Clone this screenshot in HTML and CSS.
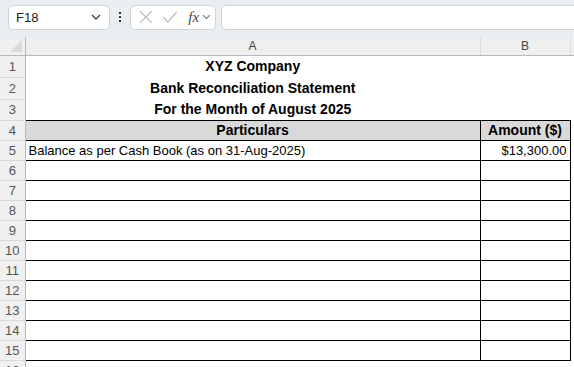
FILE: index.html
```html
<!DOCTYPE html>
<html lang="en">
<head>
  <meta charset="UTF-8" />
  <title>Bank Reconciliation Statement</title>
  <link rel="stylesheet" href="styles.css">
</head>
<body>
  <div class="toolbar">
    <div class="namebox">
      <span>F18</span>
      <svg class="chev" width="10" height="6" viewBox="0 0 10 6"><path d="M1 1l4 4 4-4" fill="none" stroke="#444" stroke-width="1.3"/></svg>
    </div>
    <div class="dots"><span></span><span></span><span></span></div>
    <div class="fx-group">
      <svg width="14" height="14" viewBox="0 0 14 14"><path d="M1 1l12 12M13 1L1 13" stroke="#b5b5b5" stroke-width="1.2"/></svg>
      <svg width="16" height="14" viewBox="0 0 16 14"><path d="M1 7l5 5 9-10" fill="none" stroke="#b5b5b5" stroke-width="1.2"/></svg>
      <span class="fx">fx</span>
      <svg class="chev-sm" width="9" height="6" viewBox="0 0 9 6"><path d="M1 1l3.5 3.5L8 1" fill="none" stroke="#777" stroke-width="1.1"/></svg>
    </div>
    <div class="formula"></div>
  </div>

  <table class="sheet">
    <colgroup>
      <col class="c-num">
      <col class="c-a">
      <col class="c-b">
      <col class="c-rest">
    </colgroup>
    <thead>
      <tr>
        <th class="corner"><span class="tri"></span></th>
        <th>A</th>
        <th>B</th>
        <th class="rest"></th>
      </tr>
    </thead>
    <tbody>
      <tr class="tall"><td class="num">1</td><td class="title">XYZ Company</td><td></td><td></td></tr>
      <tr class="tall"><td class="num">2</td><td class="title">Bank Reconciliation Statement</td><td></td><td></td></tr>
      <tr class="mid"><td class="num">3</td><td class="title">For the Month of August 2025</td><td></td><td></td></tr>
      <tr class="head"><td class="num">4</td><td class="box">Particulars</td><td class="box">Amount ($)</td><td></td></tr>
      <tr><td class="num">5</td><td class="box">Balance as per Cash Book (as on 31-Aug-2025)</td><td class="box amt">$13,300.00</td><td></td></tr>
      <tr><td class="num">6</td><td class="box"></td><td class="box"></td><td></td></tr>
      <tr><td class="num">7</td><td class="box"></td><td class="box"></td><td></td></tr>
      <tr><td class="num">8</td><td class="box"></td><td class="box"></td><td></td></tr>
      <tr><td class="num">9</td><td class="box"></td><td class="box"></td><td></td></tr>
      <tr><td class="num">10</td><td class="box"></td><td class="box"></td><td></td></tr>
      <tr><td class="num">11</td><td class="box"></td><td class="box"></td><td></td></tr>
      <tr><td class="num">12</td><td class="box"></td><td class="box"></td><td></td></tr>
      <tr><td class="num">13</td><td class="box"></td><td class="box"></td><td></td></tr>
      <tr><td class="num">14</td><td class="box"></td><td class="box"></td><td></td></tr>
      <tr><td class="num">15</td><td class="box"></td><td class="box"></td><td></td></tr>
      <tr><td class="num">16</td><td></td><td></td><td></td></tr>
    </tbody>
  </table>
</body>
</html>
```

FILE: styles.css
```css
* { box-sizing: border-box; }
body {
  margin: 0;
  font-family: "Liberation Sans", Arial, sans-serif;
  background: #fff;
  color: #000;
  overflow: hidden;
}
.toolbar {
  display: flex;
  align-items: center;
  height: 37px;
  padding: 0 0 3px 8px;
  background: #e8eef1;
}
.namebox {
  display: flex;
  align-items: center;
  justify-content: space-between;
  width: 102px;
  height: 25px;
  padding: 0 8px 0 7px;
  background: #fff;
  border: 1px solid #d0d4d7;
  border-radius: 5px;
  font-size: 13px;
  color: #222;
}
.dots {
  display: flex;
  flex-direction: column;
  align-items: center;
  gap: 2px;
  width: 20px;
}
.dots span {
  width: 2px;
  height: 2px;
  background: #333;
}
.fx-group {
  display: flex;
  align-items: center;
  gap: 9px;
  width: 86px;
  height: 25px;
  padding: 0 4px 0 8px;
  background: #fff;
  border: 1px solid #d0d4d7;
  border-radius: 5px;
}
.fx {
  font-family: "Liberation Serif", "Times New Roman", serif;
  font-style: italic;
  font-size: 15px;
  color: #444;
  margin-left: 2px;
  margin-right: -6px;
}
.formula {
  flex: 1;
  height: 25px;
  margin-left: 5px;
  background: #fff;
  border: 1px solid #d0d4d7;
  border-right: none;
  border-radius: 5px 0 0 5px;
}
.sheet {
  border-collapse: collapse;
  table-layout: fixed;
  width: 574px;
  font-size: 13px;
}
.c-num { width: 25px; }
.c-a { width: 455px; }
.c-b { width: 90px; }
.c-rest { width: 4px; }
th {
  height: 18px;
  padding: 0;
  background: #efefef;
  border-bottom: 1px solid #b8b8b8;
  border-left: 1px solid #dcdcdc;
  font-weight: normal;
  font-size: 12px;
  color: #444;
}
th.corner {
  position: relative;
  border-left: none;
  border-right: 1px solid #b8b8b8;
}
.tri {
  position: absolute;
  right: 3px;
  bottom: 3px;
  width: 0;
  height: 0;
  border-left: 12px solid transparent;
  border-bottom: 12px solid #dadada;
}
td {
  height: 20px;
  padding: 0 3px;
  white-space: nowrap;
  overflow: hidden;
}
tr.tall td { height: 22px; }
tr.mid td { height: 21px; }
td.num {
  padding: 0;
  text-align: center;
  background: #f0f0f0;
  color: #555;
  font-size: 13px;
  border-right: 1px solid #b8b8b8;
  border-bottom: 1px solid #dadada;
}
td.title {
  text-align: center;
  font-weight: bold;
  font-size: 14px;
}
td.box { border: 1px solid #000; }
tr.head td.box {
  background: #d9d9d9;
  text-align: center;
  font-weight: bold;
  font-size: 14px;
}
td.amt { text-align: right; }
```
